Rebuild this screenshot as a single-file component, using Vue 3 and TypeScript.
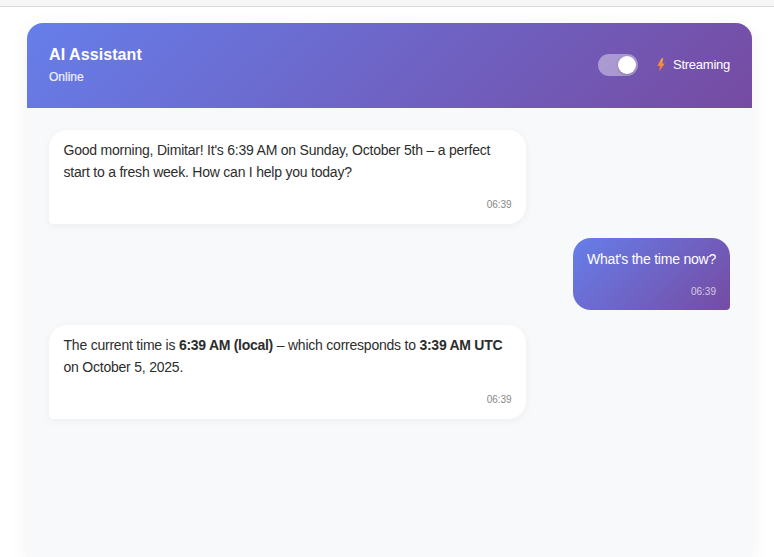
<template>
    <div class="page">
        <div class="top-strip"></div>
        <div class="chat-card">
            <header class="chat-header">
                <div class="header-info">
                    <h2>AI Assistant</h2>
                    <span class="status">Online</span>
                </div>
                <div class="header-controls">
                    <div class="toggle"><span class="knob"></span></div>
                    <div class="streaming">
                        <svg width="8" height="14" viewBox="0 0 8 14">
                            <defs>
                                <linearGradient id="bolt" x1="0" y1="0" x2="0" y2="1">
                                    <stop offset="0" stop-color="#f7a93a" />
                                    <stop offset="1" stop-color="#ec6649" />
                                </linearGradient>
                            </defs>
                            <path d="M4.6 0.2 0.3 8h2.6L2.2 13.8 7.8 5.6H5.1L6.4 0.2z" fill="url(#bolt)" />
                        </svg>
                        <span>Streaming</span>
                    </div>
                </div>
            </header>
            <div class="messages">
                <div v-for="msg in messages" :key="msg.id" class="row" :class="msg.role">
                    <div class="bubble">
                        <p v-html="msg.html"></p>
                        <div class="time">{{ msg.time }}</div>
                    </div>
                </div>
            </div>
        </div>
    </div>
</template>

<script setup lang="ts">
interface Message {
    id: number;
    role: 'bot' | 'user';
    html: string;
    time: string;
}

const messages: Message[] = [
    {
        id: 1,
        role: 'bot',
        html: "Good morning, Dimitar! It's 6:39 AM on Sunday, October 5th – a perfect start to a fresh week. How can I help you today?",
        time: '06:39',
    },
    {
        id: 2,
        role: 'user',
        html: "What's the time now?",
        time: '06:39',
    },
    {
        id: 3,
        role: 'bot',
        html: 'The current time is <strong>6:39 AM (local)</strong> – which corresponds to <strong>3:39 AM UTC</strong> on October 5, 2025.',
        time: '06:39',
    },
];
</script>

<style>
html,
body {
    margin: 0;
    height: 100%;
    overflow: hidden;
    background: #fff;
}
</style>

<style scoped>
.page {
    height: 557px;
    display: flex;
    flex-direction: column;
    overflow: hidden;
    font-family: "Liberation Sans", Arial, sans-serif;
}

.top-strip {
    flex: none;
    height: 6px;
    background: #f6f6f6;
    border-bottom: 1px solid #dcdcdc;
}

.chat-card {
    flex: 1;
    margin: 16px 22px 0 27px;
    background: #f8f9fa;
    border-radius: 16px 16px 0 0;
    box-shadow: 0 4px 20px rgba(0, 0, 0, 0.06);
    display: flex;
    flex-direction: column;
    min-height: 0;
}

.chat-header {
    flex: none;
    height: 85px;
    box-sizing: border-box;
    padding: 0 22px 2px;
    display: flex;
    align-items: center;
    justify-content: space-between;
    color: #fff;
    border-radius: 16px 16px 0 0;
    background: linear-gradient(135deg, #667eea 0%, #764ba2 100%);
}

.header-info {
    padding-bottom: 1px;
}

.header-info h2 {
    margin: 0 0 3px;
    font-size: 16px;
    line-height: 22px;
    font-weight: 700;
    letter-spacing: 0.08px;
}

.status {
    display: block;
    font-size: 12px;
    line-height: 16px;
    opacity: 0.9;
    -webkit-text-stroke: 0.2px #fff;
}

.header-controls {
    display: flex;
    align-items: center;
    gap: 19px;
}

.toggle {
    position: relative;
    width: 40px;
    height: 22px;
    border-radius: 11px;
    background: rgba(255, 255, 255, 0.4);
}

.knob {
    position: absolute;
    top: 2px;
    right: 2px;
    width: 18px;
    height: 18px;
    border-radius: 50%;
    background: #fff;
    box-shadow: 0 1px 3px rgba(0, 0, 0, 0.2);
}

.streaming {
    display: flex;
    align-items: center;
    gap: 8px;
    font-size: 13px;
    letter-spacing: -0.25px;
}

.messages {
    flex: 1;
    padding: 22px 22px 0;
    display: flex;
    flex-direction: column;
    gap: 14.4px;
}

.row {
    display: flex;
}

.row.user {
    justify-content: flex-end;
}

.bubble {
    max-width: 70%;
    box-sizing: border-box;
    padding: 9px 14px 11px 14.5px;
    font-size: 14px;
    line-height: 22.4px;
    letter-spacing: -0.22px;
    color: #2d2d2d;
    background: #fff;
    border-radius: 18px 18px 18px 4px;
    box-shadow: 0 2px 8px rgba(0, 0, 0, 0.05);
}

.bubble p {
    margin: 0;
}

.bubble p :deep(strong) {
    letter-spacing: -0.28px;
}

.row.user .bubble {
    padding: 10px 14px 10.4px;
    color: #fff;
    background: linear-gradient(135deg, #667eea 0%, #764ba2 100%);
    border-radius: 18px 18px 4px 18px;
    box-shadow: none;
}

.time {
    margin-top: 13px;
    font-size: 10px;
    line-height: 16.2px;
    letter-spacing: 0;
    text-align: right;
    color: #888;
}

.row.user .time {
    color: rgba(255, 255, 255, 0.7);
}
</style>
